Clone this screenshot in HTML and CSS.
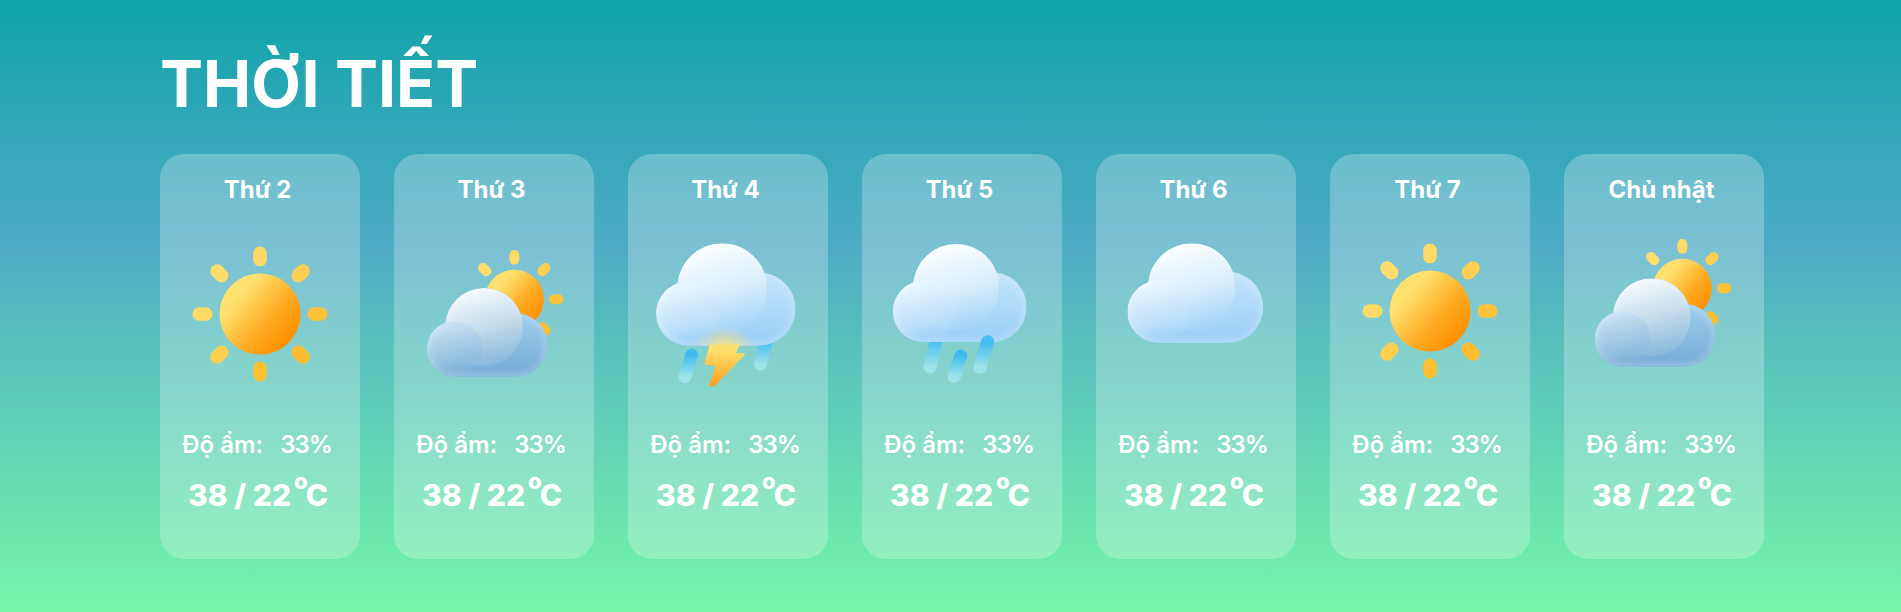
FILE: index.html
```html
<!DOCTYPE html>
<html lang="vi">
<head>
<meta charset="utf-8">
<title>Thời tiết</title>
<link rel="stylesheet" href="styles.css">
</head>
<body>
<svg class="defs" aria-hidden="true">
  <defs>
    <linearGradient id="sunFill" x1="0.22" y1="0.2" x2="0.88" y2="0.78">
      <stop offset="0.08" stop-color="#ffe170"/>
      <stop offset="0.62" stop-color="#ffab22"/>
      <stop offset="1" stop-color="#ff9100"/>
    </linearGradient>
    <linearGradient id="lightBase" x1="0" y1="0" x2="0" y2="1">
      <stop offset="0.1" stop-color="#cde9fb"/>
      <stop offset="0.9" stop-color="#a0d2f8"/>
    </linearGradient>
    <linearGradient id="lightBig" x1="0.3" y1="0" x2="0.6" y2="1">
      <stop offset="0" stop-color="#ffffff"/>
      <stop offset="0.6" stop-color="#d6edfc" stop-opacity="0.95"/>
      <stop offset="1" stop-color="#aed9f9" stop-opacity="0.2"/>
    </linearGradient>
    <linearGradient id="lightLeft" x1="0.3" y1="0" x2="0.55" y2="1">
      <stop offset="0" stop-color="#eff8fe"/>
      <stop offset="0.7" stop-color="#bbdffa"/>
      <stop offset="1" stop-color="#a8d6f9" stop-opacity="0.1"/>
    </linearGradient>
    <linearGradient id="darkBase" x1="0" y1="0" x2="0" y2="1">
      <stop offset="0.2" stop-color="#a3d2ee"/>
      <stop offset="0.9" stop-color="#7cafd8"/>
    </linearGradient>
    <linearGradient id="darkBig" x1="0.3" y1="0" x2="0.6" y2="1">
      <stop offset="0" stop-color="#fbfdfe"/>
      <stop offset="0.55" stop-color="#c3dbe9" stop-opacity="0.95"/>
      <stop offset="1" stop-color="#a6c8e0" stop-opacity="0.25"/>
    </linearGradient>
    <linearGradient id="darkLeft" x1="0.3" y1="0" x2="0.55" y2="1">
      <stop offset="0" stop-color="#cde4f4"/>
      <stop offset="0.7" stop-color="#94c0e0"/>
      <stop offset="1" stop-color="#84b4da" stop-opacity="0.2"/>
    </linearGradient>
    <linearGradient id="dropFill" x1="0" y1="0" x2="0" y2="1">
      <stop offset="0" stop-color="#36b8f5"/>
      <stop offset="1" stop-color="#a2e6ee"/>
    </linearGradient>
    <linearGradient id="boltFill" x1="0" y1="0" x2="0" y2="1">
      <stop offset="0.1" stop-color="#ffe26e"/>
      <stop offset="1" stop-color="#ff9f1c"/>
    </linearGradient>
    <radialGradient id="boltGlow">
      <stop offset="0" stop-color="#ffe274" stop-opacity="0.8"/>
      <stop offset="1" stop-color="#ffe274" stop-opacity="0"/>
    </radialGradient>
    <filter id="rim" x="-5%" y="-5%" width="110%" height="110%" color-interpolation-filters="sRGB">
      <feGaussianBlur in="SourceAlpha" stdDeviation="4" result="blur"/>
      <feComposite in="SourceAlpha" in2="blur" operator="out" result="edge"/>
      <feGaussianBlur in="edge" stdDeviation="0.8" result="soft"/>
      <feFlood flood-color="#ffffff" flood-opacity="0.45"/>
      <feComposite in2="soft" operator="in" result="tint"/>
      <feComposite in="tint" in2="SourceAlpha" operator="in" result="glow"/>
      <feMerge>
        <feMergeNode in="SourceGraphic"/>
        <feMergeNode in="glow"/>
      </feMerge>
    </filter>
    <clipPath id="cloudClip">
      <circle cx="57.3" cy="39" r="39"/>
      <circle cx="27.8" cy="60.9" r="27.8"/>
      <circle cx="89.3" cy="57" r="31.7"/>
      <rect x="27.8" y="50" width="61.5" height="38.7"/>
    </clipPath>
    <clipPath id="glowClip">
      <rect x="50" y="90" width="100" height="36"/>
    </clipPath>
    <symbol id="sun" viewBox="-70 -70 140 140">
      <rect x="-6.8" y="-67.5" width="13.6" height="20" rx="6.8" fill="#ffda68"/>
      <rect x="-6.8" y="-67.5" width="13.6" height="20" rx="6.8" fill="#ffcf52" transform="rotate(45)"/>
      <rect x="-6.8" y="-67.5" width="13.6" height="20" rx="6.8" fill="#ffc238" transform="rotate(90)"/>
      <rect x="-6.8" y="-67.5" width="13.6" height="20" rx="6.8" fill="#ffbc2c" transform="rotate(135)"/>
      <rect x="-6.8" y="-67.5" width="13.6" height="20" rx="6.8" fill="#ffc030" transform="rotate(180)"/>
      <rect x="-6.8" y="-67.5" width="13.6" height="20" rx="6.8" fill="#ffd04f" transform="rotate(225)"/>
      <rect x="-6.8" y="-67.5" width="13.6" height="20" rx="6.8" fill="#ffda65" transform="rotate(270)"/>
      <rect x="-6.8" y="-67.5" width="13.6" height="20" rx="6.8" fill="#ffdd6b" transform="rotate(315)"/>
      <circle r="40.5" fill="url(#sunFill)"/>
    </symbol>
    <symbol id="cloudLight" viewBox="0 0 121 89">
      <g filter="url(#rim)">
        <g clip-path="url(#cloudClip)">
          <rect width="121" height="89" fill="url(#lightBase)"/>
          <circle cx="57.3" cy="39" r="39" fill="url(#lightBig)"/>
          <circle cx="27.8" cy="60.9" r="27.8" fill="url(#lightLeft)"/>
        </g>
      </g>
    </symbol>
    <symbol id="cloudDark" viewBox="0 0 121 89">
      <g filter="url(#rim)">
        <g clip-path="url(#cloudClip)">
          <rect width="121" height="89" fill="url(#darkBase)"/>
          <circle cx="57.3" cy="39" r="39" fill="url(#darkBig)"/>
          <circle cx="27.8" cy="60.9" r="27.8" fill="url(#darkLeft)"/>
        </g>
      </g>
    </symbol>
  </defs>
</svg>

<main class="page">
  <h1 class="title">THỜI TIẾT</h1>
  <section class="week">

    <article class="card">
      <h2 class="day">Thứ 2</h2>
      <svg class="icon" viewBox="0 0 200 190"><use href="#sun" x="30" y="24" width="140" height="140"/></svg>
      <p class="humidity"><span>Độ ẩm:</span><span class="value">33%</span></p>
      <p class="temp">38 / 22<sup class="deg">o</sup>C</p>
    </article>

    <article class="card">
      <h2 class="day">Thứ 3</h2>
      <svg class="icon" viewBox="0 0 200 190">
        <use href="#sun" x="69.3" y="28.3" width="102" height="102"/>
        <use href="#cloudDark" x="32.7" y="68" width="121" height="89"/>
      </svg>
      <p class="humidity"><span>Độ ẩm:</span><span class="value">33%</span></p>
      <p class="temp">38 / 22<sup class="deg">o</sup>C</p>
    </article>

    <article class="card">
      <h2 class="day">Thứ 4</h2>
      <svg class="icon" viewBox="0 0 200 190">
        <line class="drop" x1="138.7" y1="120" x2="132.7" y2="144" stroke="url(#dropFill)"/>
        <line class="drop" x1="63.7" y1="135" x2="57" y2="156.7" stroke="url(#dropFill)"/>
        <use href="#cloudLight" x="28" y="23.3" width="139.7" height="102.7"/>
        <ellipse cx="96.7" cy="125" rx="30" ry="18" fill="url(#boltGlow)" clip-path="url(#glowClip)"/>
        <polygon points="82,125 111.3,125 107,133.5 117,134 86,166 81.5,166 88,145.5 77,144" fill="url(#boltFill)" stroke="url(#boltFill)" stroke-width="1" stroke-linejoin="round"/>
      </svg>
      <p class="humidity"><span>Độ ẩm:</span><span class="value">33%</span></p>
      <p class="temp">38 / 22<sup class="deg">o</sup>C</p>
    </article>

    <article class="card">
      <h2 class="day">Thứ 5</h2>
      <svg class="icon" viewBox="0 0 200 190">
        <line class="drop" x1="74.7" y1="118" x2="68" y2="146.7" stroke="url(#dropFill)"/>
        <line class="drop" x1="98.7" y1="136" x2="92" y2="156.7" stroke="url(#dropFill)"/>
        <use href="#cloudLight" x="30.7" y="24" width="134" height="98.5"/>
        <line class="drop" x1="125.7" y1="121.7" x2="118" y2="147.3" stroke="url(#dropFill)"/>
      </svg>
      <p class="humidity"><span>Độ ẩm:</span><span class="value">33%</span></p>
      <p class="temp">38 / 22<sup class="deg">o</sup>C</p>
    </article>

    <article class="card">
      <h2 class="day">Thứ 6</h2>
      <svg class="icon" viewBox="0 0 200 190">
        <use href="#cloudLight" x="31.3" y="23.3" width="136" height="100"/>
      </svg>
      <p class="humidity"><span>Độ ẩm:</span><span class="value">33%</span></p>
      <p class="temp">38 / 22<sup class="deg">o</sup>C</p>
    </article>

    <article class="card">
      <h2 class="day">Thứ 7</h2>
      <svg class="icon" viewBox="0 0 200 190"><use href="#sun" x="30" y="21" width="140" height="140"/></svg>
      <p class="humidity"><span>Độ ẩm:</span><span class="value">33%</span></p>
      <p class="temp">38 / 22<sup class="deg">o</sup>C</p>
    </article>

    <article class="card">
      <h2 class="day">Chủ nhật</h2>
      <svg class="icon" viewBox="0 0 200 190">
        <use href="#sun" x="67.3" y="17.3" width="102" height="102"/>
        <use href="#cloudDark" x="30.3" y="58.3" width="121" height="89"/>
      </svg>
      <p class="humidity"><span>Độ ẩm:</span><span class="value">33%</span></p>
      <p class="temp">38 / 22<sup class="deg">o</sup>C</p>
    </article>

  </section>
</main>
</body>
</html>
```
FILE: styles.css
```css
* {
  box-sizing: border-box;
}

html,
body {
  margin: 0;
  padding: 0;
}

body {
  font-family: "Inter", "Liberation Sans", sans-serif;
  color: #ffffff;
}

.defs {
  position: absolute;
  width: 0;
  height: 0;
}

.page {
  height: 612px;
  padding: 45px 137px 0 160px;
  overflow: hidden;
  background: linear-gradient(180deg, #10a4aa 0%, #4fabc5 40%, #74f6a8 100%);
}

.title {
  margin: 0 0 31px;
  font-size: 64.5px;
  line-height: 78px;
  font-weight: 700;
}

.week {
  display: flex;
  gap: 34px;
}

.card {
  width: 200px;
  height: 405px;
  padding-top: 21px;
  border-radius: 24px;
  background: rgba(255, 255, 255, 0.25);
  text-align: center;
}

.day {
  margin: 0 0 15px;
  padding-right: 5px;
  font-size: 24px;
  line-height: 30px;
  font-weight: 700;
}

.icon {
  display: block;
  width: 200px;
  height: 190px;
}

.drop {
  stroke-width: 13;
  stroke-linecap: round;
  opacity: 0.85;
}

.humidity {
  display: flex;
  justify-content: center;
  gap: 17px;
  margin: 20px 0 0;
  padding-right: 6px;
  font-size: 24px;
  line-height: 30px;
  font-weight: 600;
}

.value {
  letter-spacing: -1px;
}

.temp {
  margin: 15px 0 0;
  padding-right: 4px;
  font-size: 30px;
  line-height: 40px;
  font-weight: 800;
}

.deg {
  margin: 0 -2px 0 3px;
  font-size: 22px;
  line-height: 0;
  vertical-align: 17px;
}
```
